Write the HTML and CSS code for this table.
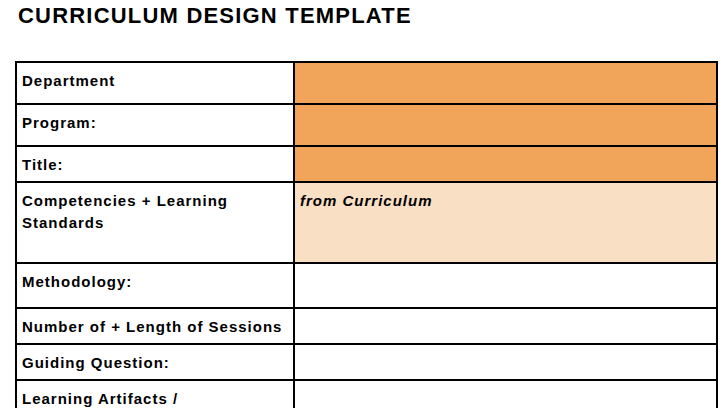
FILE: index.html
```html
<!DOCTYPE html>
<html lang="en">
<head>
<meta charset="utf-8">
<title>Curriculum Design Template</title>
<link rel="stylesheet" href="styles.css">
</head>
<body>
<h1 class="title">CURRICULUM DESIGN TEMPLATE</h1>
<table class="grid">
  <colgroup><col class="c-label"><col class="c-value"></colgroup>
  <tr class="r42"><th>Department</th><td class="fill-strong"></td></tr>
  <tr class="r42"><th>Program:</th><td class="fill-strong"></td></tr>
  <tr class="r36"><th>Title:</th><td class="fill-strong"></td></tr>
  <tr class="r81"><th>Competencies + Learning Standards</th><td class="fill-soft"><em>from Curriculum</em></td></tr>
  <tr class="r45"><th>Methodology:</th><td></td></tr>
  <tr class="r36"><th>Number of + Length of Sessions</th><td></td></tr>
  <tr class="r36"><th>Guiding Question:</th><td></td></tr>
  <tr class="r60"><th>Learning Artifacts /</th><td></td></tr>
</table>
</body>
</html>
```
FILE: styles.css
```css
html, body {
  margin: 0;
  padding: 0;
  background: #ffffff;
}
body {
  font-family: "Liberation Sans", Arial, sans-serif;
  color: #000;
  overflow: hidden;
}
.title {
  margin: 0;
  padding: 4px 0 0 18px;
  font-size: 22px;
  letter-spacing: 1.2px;
  line-height: 24px;
  font-weight: bold;
}
.grid {
  margin: 33px 0 0 15px;
  border-collapse: collapse;
  width: 703px;
  table-layout: fixed;
}
.c-label { width: 278px; }
.grid th, .grid td {
  border: 2px solid #000;
  vertical-align: top;
  padding: 7px 5px 0 5px;
  font-size: 15px;
  letter-spacing: 1px;
  line-height: 22px;
  text-align: left;
}
.grid th { font-weight: bold; }
.grid td em {
  font-weight: bold;
  font-style: italic;
}
.fill-strong { background: #f1a55b; }
.fill-soft { background: #f9dfc4; }
.r42 { height: 42px; }
.r36 { height: 36px; }
.r81 { height: 81px; }
.r45 { height: 45px; }
.r60 { height: 60px; }
```
